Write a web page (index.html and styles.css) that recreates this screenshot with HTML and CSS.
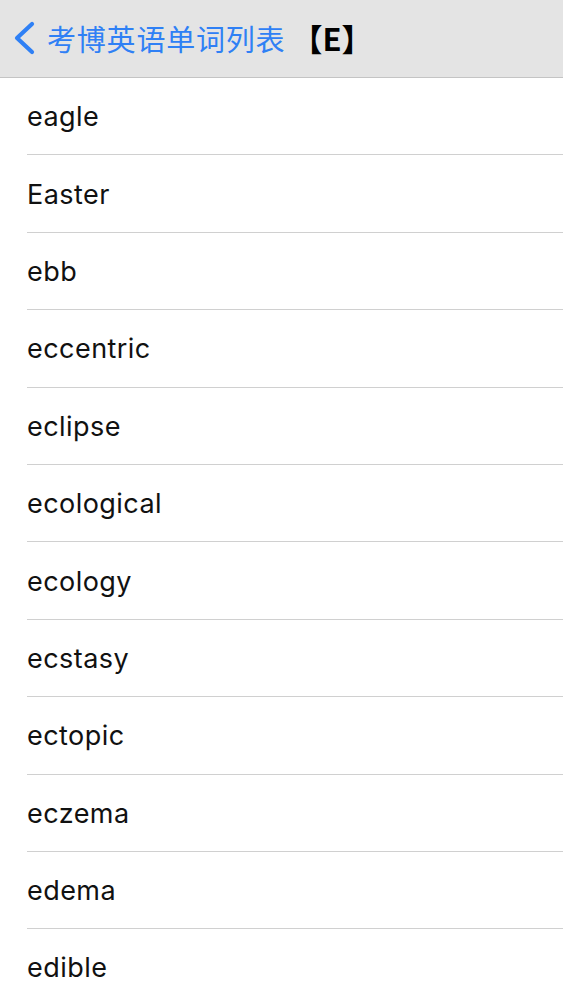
FILE: index.html
```html
<!DOCTYPE html>
<html lang="zh-CN">
<head>
<meta charset="utf-8">
<link rel="stylesheet" href="styles.css">
</head>
<body>
<header class="nav">
  <svg class="back" width="26" height="34" viewBox="0 0 26 34"><path d="M20 3 L5 17 L20 31" fill="none" stroke="#2f80f5" stroke-width="4.2" stroke-linecap="round" stroke-linejoin="round"/></svg>
  <span class="title">考博英语单词列表</span>
  <span class="letter">【E】</span>
</header>
<ul class="list">
  <li>eagle</li>
  <li>Easter</li>
  <li>ebb</li>
  <li>eccentric</li>
  <li>eclipse</li>
  <li>ecological</li>
  <li>ecology</li>
  <li>ecstasy</li>
  <li>ectopic</li>
  <li>eczema</li>
  <li>edema</li>
  <li>edible</li>
</ul>
</body>
</html>
```
FILE: styles.css
```css
html, body { margin: 0; padding: 0; background: #fff; }
body { width: 563px; overflow: hidden; font-family: "Inter", "Noto Sans CJK SC", sans-serif; }
.nav {
  height: 78px;
  box-sizing: border-box;
  background: #e4e4e4;
  border-bottom: 1px solid #c4c4c4;
  display: flex;
  align-items: center;
  padding-left: 12px;
  padding-bottom: 2px;
}
.back { flex: none; margin-right: 9px; }
.title {
  font-family: "Noto Sans CJK SC", sans-serif;
  font-size: 29px;
  color: #2f80f5;
  letter-spacing: 0.8px;
}
.letter {
  font-family: "Noto Sans CJK SC", sans-serif;
  font-size: 31px;
  font-weight: 700;
  color: #000;
  margin-left: 6px;
}
.list { list-style: none; margin: 0; padding: 0 0 0 27px; }
.list li {
  height: 77.4px;
  box-sizing: border-box;
  border-bottom: 1px solid #d0d0d0;
  display: flex;
  align-items: center;
  font-size: 27px;
  letter-spacing: 0.45px;
  color: #111;
  padding-top: 1px;
}
```
